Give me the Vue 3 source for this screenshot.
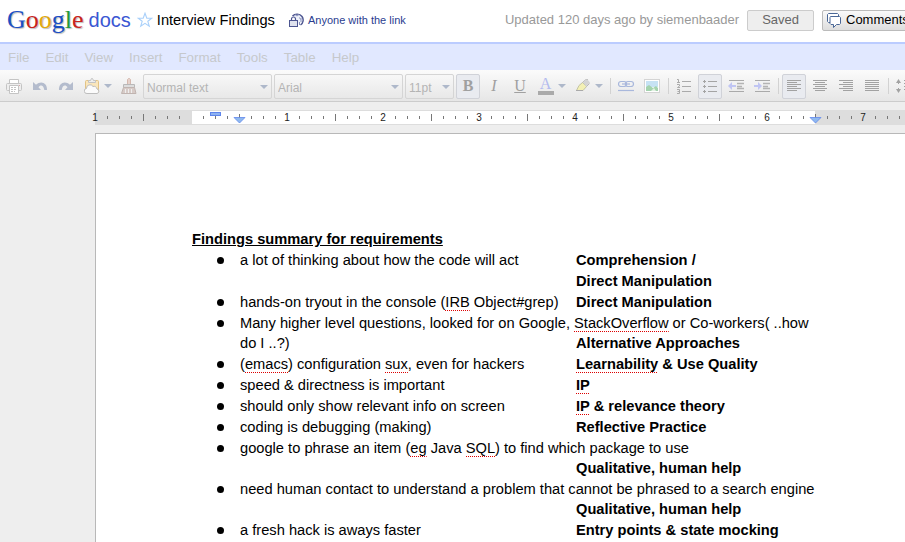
<script setup>
const menus = ['File', 'Edit', 'View', 'Insert', 'Format', 'Tools', 'Table', 'Help']

const logo = [
  ['G', 'blue'],
  ['o', 'red'],
  ['o', 'gold'],
  ['g', 'blue'],
  ['l', 'green'],
  ['e', 'red'],
]

const alignments = [
  { name: 'Align left', active: true, d: 'M1 2.5h14M1 4.5h10M1 6.5h14M1 8.5h10M1 10.5h14M1 12.5h10' },
  { name: 'Align center', active: false, d: 'M1 2.5h14M3 4.5h10M1 6.5h14M3 8.5h10M1 10.5h14M3 12.5h10' },
  { name: 'Align right', active: false, d: 'M1 2.5h14M5 4.5h10M1 6.5h14M5 8.5h10M1 10.5h14M5 12.5h10' },
  { name: 'Justify', active: false, d: 'M1 2.5h14M1 4.5h14M1 6.5h14M1 8.5h14M1 10.5h14M1 12.5h14' },
]

// Ruler marks sit every eighth of an inch (12px), counted from the page edge.
const ticks = []
const labels = []
for (let k = 0; k <= 68; k++) {
  const x = k * 12
  if (k % 8 === 0) {
    if (k !== 8) labels.push({ x, n: Math.abs(k / 8 - 1) })
  } else {
    ticks.push({ x, half: k % 8 === 4 })
  }
}

const t = (text) => ({ text })
const sp = (text) => ({ text, cls: 'typo' })
const b = (text) => ({ text, cls: 'strong' })
const bsp = (text) => ({ text, cls: 'strong typo' })

const items = [
  [[t('a lot of thinking about how the code will act'), t('\t'), b('Comprehension /')], [t('\t'), b('Direct Manipulation')]],
  [[t('hands-on tryout in the console ('), sp('IRB'), t(' Object#grep)'), t('\t'), b('Direct Manipulation')]],
  [[t('Many higher level questions, looked for on Google, '), sp('StackOverflow'), t(' or Co-workers( ..how '), t('do I ..?)'), t('\t'), b('Alternative Approaches')]],
  [[t('('), sp('emacs'), t(') configuration '), sp('sux'), t(', even for hackers'), t('\t'), bsp('Learnability'), b(' & Use Quality')]],
  [[t('speed & directness is important'), t('\t'), bsp('IP')]],
  [[t('should only show relevant info on screen'), t('\t'), bsp('IP'), b(' & relevance theory')]],
  [[t('coding is debugging (making)'), t('\t'), b('Reflective Practice')]],
  [[t('google to phrase an item ('), sp('eg'), t(' Java '), sp('SQL'), t(') to find which package to use'), t('\n\t'), b('Qualitative, human help')]],
  [[t('need human contact to understand a problem that cannot be phrased to a search engine'), t('\n\t'), b('Qualitative, human help')]],
  [[t('a fresh hack is aways faster'), t('\t'), b('Entry points & state mocking')]],
]
</script>

<template>
  <div class="app">
    <header class="top">
      <a class="logo" href="#" aria-label="Google docs">
        <span class="google"><span v-for="([ch, hue], i) in logo" :key="i" :class="hue">{{ ch }}</span></span>
        <span class="docs">docs</span>
      </a>
      <button class="plain star" aria-label="Star">
        <svg width="16" height="16" viewBox="0 0 16 16"><path d="M8 1.2l1.8 4.9 5 .1-4 3.1 1.5 5L8 11.4l-4.300 2.900 1.500-5-4-3.100 5-.1z" fill="#fff" stroke="#a9d0fa" stroke-width="1.100" /></svg>
      </button>
      <h1 class="title">Interview Findings</h1>
      <a class="share" href="#">
        <svg width="15" height="15" viewBox="0 0 15 15">
          <circle cx="8.500" cy="6" r="5" fill="#eef1fa" />
          <path d="M3.500 3A6 5.500 0 0 1 13 3.500 6 6 0 0 1 11.500 12" fill="none" stroke="#4c5590" stroke-width="1.400" />
          <path d="M6 1.500l2 1.500 2-1.500M10.500 4.500l1 2M12 5v4M10.500 9v3" fill="none" stroke="#8a92bd" />
          <path d="M2.500 7.500V6a2 2 0 0 1 4 0v1.500" fill="#fff" stroke="#4c5590" stroke-width="1.200" />
          <rect x=".5" y="7.500" width="8" height="6" fill="#dfe2ee" stroke="#4c5590" />
        </svg>
        Anyone with the link
      </a>
      <span class="updated">Updated 120 days ago by siemenbaader</span>
      <button class="btn saved" disabled>Saved</button>
      <button class="btn comments">
        <svg width="14" height="15" viewBox="0 0 14 15">
          <path d="M3 9.500H1.500L.5 8.500v-7l1-1h9l1 1V3" fill="#fff" stroke="#4a6796" />
          <path d="M3.500 3.500h9l1 1v6l-1 1H9.500l-3 3v-3H4l-1-1v-6z" fill="#fff" stroke="#4a6796" />
        </svg>
        Comments
      </button>
    </header>

    <nav class="menubar" aria-label="Menu">
      <button v-for="m in menus" :key="m" class="plain menu">{{ m }}</button>
    </nav>

    <div class="toolbar" role="toolbar" aria-label="Formatting">
      <button class="tool" aria-label="Print">
        <svg width="16" height="16" viewBox="0 0 16 16" fill="#fff" stroke="#c4c4c4">
          <path d="M3.500 5V1.500h9V5" /><rect x=".5" y="5.500" width="15" height="7" rx="1" fill="#eee" />
          <path d="M3.500 7.500h9v8h-9z" /><path d="M5 9.500h6M5 11.500h6M5 13.500h4" stroke-dasharray="2 1" /><path d="M13 7.500h1" stroke="#dfa6a6" />
        </svg>
      </button>
      <button class="tool" aria-label="Undo">
        <svg width="16" height="16" viewBox="0 0 16 16"><path d="M1 4v8h8L6.500 9.200C8.500 6.500 11.500 7 12.300 12 H15C15.500 5 9 2 4 6.800z" fill="#b4bccd" /></svg>
      </button>
      <button class="tool" aria-label="Redo">
        <svg width="16" height="16" viewBox="0 0 16 16"><path d="M15 4v8H7l2.500-2.800C7.500 6.500 4.500 7 3.700 12H1C.5 5 7 2 12 6.800z" fill="#b4bccd" /></svg>
      </button>
      <button class="tool wide" aria-label="Web clipboard">
        <svg width="16" height="16" viewBox="0 0 16 16">
          <rect x="1.500" y="2.500" width="13" height="12" rx="1" fill="#fae6bb" stroke="#e2c385" />
          <path d="M4.500 4.500v-2h2l1-2h1l1 2h2v2z" fill="#eee" stroke="#c4c4c4" />
          <path d="M3 15.500a2.500 2.500 0 0 1-.5-5 3.500 3.500 0 0 1 6.500-2 3 3 0 0 1 4 2.500 2.300 2.300 0 0 1 0 4.500z" fill="#fbfbfb" stroke="#bdbdbd" />
        </svg>
        <i class="arrow"></i>
      </button>
      <button class="tool" aria-label="Paint format">
        <svg width="16" height="16" viewBox="0 0 16 16">
          <path d="M6.500 6.500v-5l1-1h1l1 1v5z" fill="#e6d2cb" stroke="#d5b8ae" />
          <path d="M2.500 9.500v-3h11v3z" fill="#ddd" stroke="#b8b8b8" />
          <path d="M2.500 9.500h11l1.500 6H.5z" fill="#d7cbc7" stroke="#c0b4b0" /><path d="M4.500 11v4M7.500 11v4M10.500 11v4" stroke="#eee" />
        </svg>
      </button>

      <span class="pick style"><select aria-label="Styles"><option>Normal text</option></select></span>
      <span class="pick style"><select aria-label="Font"><option>Arial</option></select></span>
      <span class="pick size"><select aria-label="Font size"><option>11pt</option></select></span>

      <button class="tool letter active" aria-label="Bold"><b>B</b></button>
      <button class="tool letter" aria-label="Italic"><em>I</em></button>
      <button class="tool letter" aria-label="Underline"><u>U</u></button>
      <button class="tool letter wide" aria-label="Text color"><span class="ink">A</span><i class="arrow"></i></button>
      <button class="tool wide" aria-label="Highlight color">
        <svg width="16" height="16" viewBox="0 0 16 16">
          <path d="M1.500 12.500L4 7.500l3.500-3 4 4-3.500 4z" fill="#f3f0b4" stroke="#c4c4a4" /><path d="M7.500 4.500L11 1.500h2M11.500 8.500l3-3" fill="none" stroke="#b4b4b4" /><path d="M8 4.500L12 1l3 3.500-4 4z" fill="#d4d4d4" /><path d="M1 12.500h7" stroke="#aaa" />
        </svg>
        <i class="arrow"></i>
      </button>
      <span class="sep"></span>
      <button class="tool" aria-label="Link">
        <svg width="18" height="12" viewBox="0 0 18 12" fill="none" stroke="#a9b8dc" stroke-width="1.200">
          <rect x="1.500" y="1.500" width="8" height="5" rx="2.500" /><rect x="8.500" y="1.500" width="8" height="5" rx="2.500" /><path d="M5 4h8" /><path d="M1 10.500h16" />
        </svg>
      </button>
      <button class="tool" aria-label="Image">
        <svg width="16" height="14" viewBox="0 0 16 14">
          <rect x=".5" y=".5" width="15" height="13" fill="#fff" stroke="#d4d4d4" /><path d="M2 2h12v6H2z" fill="#c6e2f4" /><path d="M2 12V8l3-2 4 3 3-2 2 2v3z" fill="#a4d3ae" /><path d="M7 12l3-3 2 3z" fill="#e4f2e4" />
        </svg>
      </button>
      <span class="sep"></span>
      <button class="tool" aria-label="Numbered list">
        <svg width="16" height="16" viewBox="0 0 16 16" fill="none" stroke="#aaa">
          <path d="M6 3.500h9M6 8.500h9M6 13.500h9" /><path d="M1 1.500h1.500V5M1 4.500h3M1 6.500h2.500v1.500L1.500 9.500H4M1 11.500h2.500v4H1M1.500 13.500h2" />
        </svg>
      </button>
      <button class="tool active" aria-label="Bulleted list">
        <svg width="16" height="16" viewBox="0 0 16 16" fill="none" stroke="#a4a4a4">
          <path d="M6 3.500h9M6 8.500h9M6 13.500h9" /><path d="M1 3.500h3M2.500 2v3M1 8.500h3M2.500 7v3M1 13.500h3M2.500 12v3" />
        </svg>
      </button>
      <button class="tool" aria-label="Decrease indent">
        <svg width="16" height="14" viewBox="0 0 16 14"><path d="M1 1.500h15M1 12.500h15" stroke="#aaa" /><path d="M9 4.500h7M9 7.500h5M9 9.500h7" stroke="#b4b4b4" stroke-width="1.500" /><path d="M0 7l4-4v3h4v2H4v3z" fill="#c0c5f3" /></svg>
      </button>
      <button class="tool" aria-label="Increase indent">
        <svg width="16" height="14" viewBox="0 0 16 14"><path d="M1 1.500h15M1 12.500h15" stroke="#aaa" /><path d="M9 4.500h7M9 7.500h5M9 9.500h7" stroke="#b4b4b4" stroke-width="1.500" /><path d="M8 7L4 3v3H0v2h4v3z" fill="#c0c5f3" /></svg>
      </button>
      <span class="sep"></span>
      <button v-for="a in alignments" :key="a.name" class="tool" :class="{ active: a.active }" :aria-label="a.name">
        <svg width="16" height="16" viewBox="0 0 16 16"><path :d="a.d" stroke="#a2a2a2" /></svg>
      </button>
      <span class="sep"></span>
      <button class="tool" aria-label="Line spacing">
        <svg width="16" height="16" viewBox="0 0 16 16"><path d="M2.500 2v4M2.500 10v4M8 2.500h8M8 5.500h8M8 8.500h8M8 11.500h8" stroke="#a2a2a2" /><path d="M0 5l2.500-4L5 5zM0 11l2.500 4L5 11z" fill="#a2a2a2" /></svg>
      </button>
    </div>

    <main class="canvas">
      <svg class="ruler" width="100%" height="15" aria-label="Ruler">
        <rect width="100%" height="15" fill="#ddd" />
        <rect x="97" y="1" width="623" height="13" fill="#fff" />
        <rect v-for="k in ticks" :key="k.x" :x="k.x" :y="k.half ? 4 : 6" width="1" :height="k.half ? 7 : 3" fill="#777" />
        <text v-for="l in labels" :key="l.x" :x="l.x" y="11" text-anchor="middle">{{ l.n }}</text>
        <rect x="115.500" y="2.500" width="10" height="3" fill="#8fb3f0" stroke="#5f86ec" />
        <path v-for="x in [144, 720]" :key="x" :d="`M${x - 5} 7.500h11l-5.500 5.500z`" fill="#8fb9ee" stroke="#5f86ec" stroke-width=".8" />
      </svg>
      <article class="page">
        <div class="body">
          <h2>Findings summary for requirements</h2>
          <ul>
            <li v-for="(paras, i) in items" :key="i">
              <p v-for="(runs, j) in paras" :key="j"><span v-for="(r, n) in runs" :key="n" :class="r.cls">{{ r.text }}</span></p>
            </li>
          </ul>
        </div>
      </article>
    </main>
  </div>
</template>

<style>
body {
  margin: 0;
  background: #eee;
  overflow: hidden;
}
</style>

<style scoped>
.app {
  display: flex;
  flex-direction: column;
  height: 100vh;
  overflow: hidden;
  font: 13px/16px "Liberation Sans", Arial, sans-serif;
}
button {
  font: inherit;
  flex: none;
}
.plain {
  border: 0;
  padding: 0;
  background: none;
}
.top {
  display: flex;
  align-items: center;
  height: 42px;
  flex: none;
  padding: 0 0 2px 7px;
  box-sizing: border-box;
  background: #fff;
  white-space: nowrap;
}
.logo {
  display: flex;
  align-items: center;
  gap: 5px;
  flex: none;
  text-decoration: none;
  line-height: 36px;
}
.google {
  font-family: "Liberation Serif", serif;
  font-size: 26px;
  text-shadow: 1px 1px 1px #bbb;
}
.blue { color: #1b4fc4; }
.red { color: #c9231c; }
.gold { color: #e3a90c; }
.green { color: #1f9a3c; }
.docs {
  font-size: 20px;
  color: #3a57d3;
}
.star {
  display: flex;
  margin-left: 6px;
}
.title {
  margin: 0 0 0 4px;
  font-size: 11pt;
  font-weight: 400;
  color: #000;
}
.share {
  display: flex;
  align-items: center;
  gap: 4px;
  margin-left: 14px;
  font-size: 11px;
  color: #2a3d8f;
  text-decoration: none;
}
.updated {
  margin-left: auto;
  color: #999;
}
.btn {
  display: flex;
  align-items: center;
  height: 21px;
  box-sizing: border-box;
  border: 1px solid #bbb;
  border-radius: 2px;
  padding: 0 14px;
}
.btn svg {
  flex: none;
}
.saved {
  margin-left: 8px;
  background: #eee;
  border-color: #ccc;
  color: #666;
}
.comments {
  gap: 5px;
  width: 88px;
  margin: 0 -5px 0 8px;
  padding: 0 4px;
  background: linear-gradient(#fafafa, #ddd);
  color: #000;
}
.menubar {
  display: flex;
  gap: 16px;
  height: 26px;
  flex: none;
  padding: 0 8px;
  border-top: 2px solid #bbccff;
  background: #e1e8ff;
}
.menu {
  padding-top: 2px;
  font-size: 10pt;
  color: #c6c8cc;
}
.toolbar {
  display: flex;
  align-items: center;
  gap: 2px;
  height: 32px;
  flex: none;
  padding: 1px 2px 0;
  box-sizing: border-box;
  border-bottom: 1px solid #ccc;
  background: linear-gradient(#fbfbfb, #e6e6e6);
}
.tool {
  display: flex;
  align-items: center;
  justify-content: center;
  width: 24px;
  height: 25px;
  box-sizing: border-box;
  border: 1px solid transparent;
  border-radius: 2px;
  padding: 0;
  background: none;
  color: #a0a0a0;
}
.tool svg {
  flex: none;
}
.wide {
  width: 35px;
  gap: 4px;
}
.active {
  border-color: #d0d2d8;
  background: #e9ebf0;
}
.arrow {
  border: 4px solid transparent;
  border-top-color: #aeb8ca;
  border-bottom: 0;
}
.letter {
  font: 16px/20px "Liberation Serif", serif;
}
.ink {
  width: 16px;
  box-sizing: border-box;
  border-bottom: 4px solid #aaa;
  line-height: 14px;
  color: #b3bbee;
}
.sep {
  flex: none;
  width: 1px;
  height: 16px;
  margin: 0 1px 0 2px;
  background: #d2d2d2;
}
.pick {
  position: relative;
  flex: none;
  height: 25px;
}
.pick::after {
  content: "";
  position: absolute;
  right: 4px;
  top: 11px;
  border: 4px solid transparent;
  border-top-color: #aeb8ca;
  border-bottom: 0;
  pointer-events: none;
}
.style { width: 129px; }
.size { width: 49px; }
.pick select {
  appearance: none;
  width: 100%;
  height: 25px;
  box-sizing: border-box;
  border: 1px solid #d5d5d5;
  border-radius: 2px;
  padding: 3px 3px 0;
  background: transparent;
  color: #b4b4b4;
  font: 12px/16px "Liberation Sans", Arial, sans-serif;
}
.canvas {
  flex: 1;
  display: flex;
  flex-direction: column;
  gap: 8px;
  min-height: 0;
  padding: 8px 0 0 95px;
  background: #eee;
}
.ruler {
  display: block;
  flex: none;
  overflow: visible;
  font-size: 10px;
  fill: #222;
}
.page {
  flex: 1;
  min-height: 0;
  border: solid #b8b8b8;
  border-width: 1px 0 0 1px;
  padding: 95px 0 0 96px;
  background: #fff;
}
.body {
  max-width: 624px;
  font-size: 11pt;
  line-height: 20px;
  color: #000;
}
h2 {
  margin: 0 0 1px;
  font-size: 11pt;
  line-height: 20px;
  text-decoration: underline;
}
ul {
  list-style: none;
  margin: 0;
  padding: 0 0 0 48px;
}
li {
  display: flex;
  flex-direction: column;
  position: relative;
}
li::before {
  content: "";
  position: absolute;
  left: -23px;
  top: 7px;
  width: 7px;
  height: 7px;
  border-radius: 50%;
  background: #000;
}
p {
  margin: 0 0 1px;
  white-space: pre-wrap;
  tab-size: 336px;
}
.strong {
  font-weight: 700;
}
.typo {
  background: repeating-linear-gradient(90deg, #d00 0 1px, transparent 1px 2px) bottom / 100% 1px no-repeat;
  padding-bottom: 1px;
}
</style>
